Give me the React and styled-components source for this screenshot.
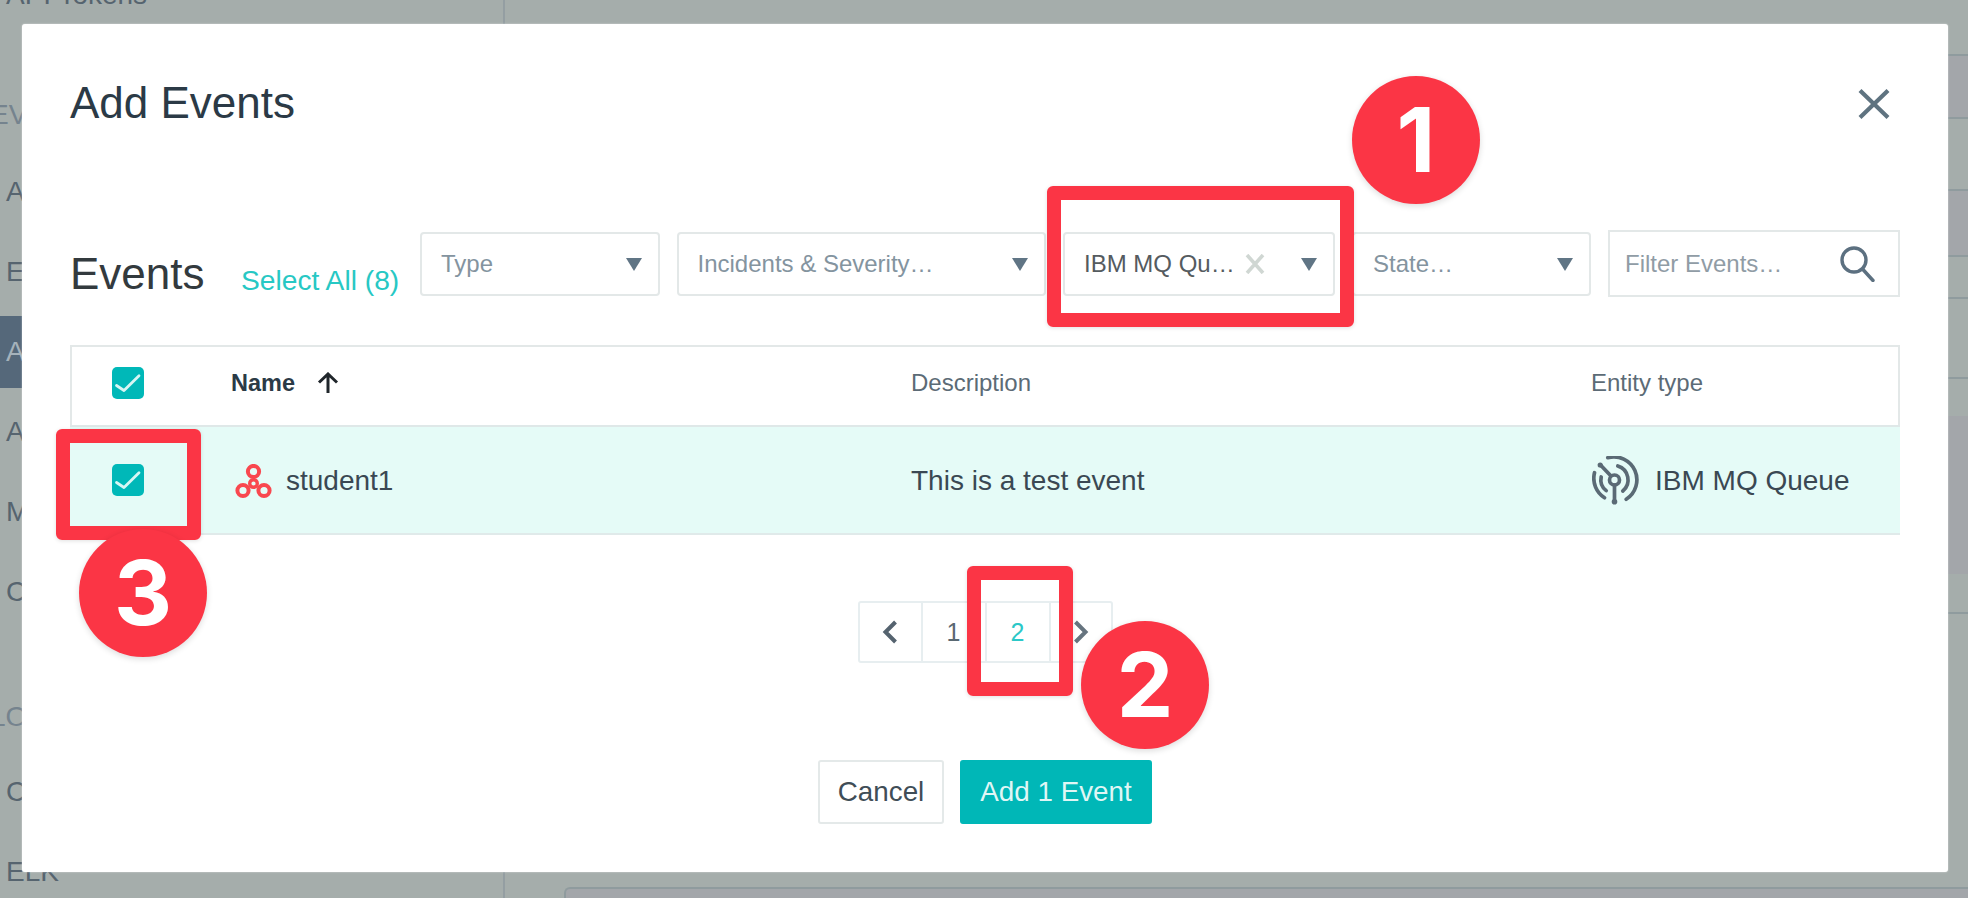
import React from "react";
import styled, { createGlobalStyle } from "styled-components";

const GlobalStyle = createGlobalStyle`
  html, body {
    margin: 0;
    padding: 0;
    height: 100%;
    overflow: hidden;
    background: #a5adab;
  }
  * {
    box-sizing: border-box;
  }
  body {
    font-family: "Liberation Sans", Arial, sans-serif;
  }
`;

const Page = styled.div`
  position: relative;
  display: flex;
  width: 1968px;
  height: 898px;
  overflow: hidden;
  background: #a5adab;
`;

const Sidebar = styled.nav`
  flex: 0 0 505px;
  height: 898px;
  overflow: hidden;
  border-right: 2px solid #949ea2;
`;

const NavList = styled.div`
  margin-top: -45px;
`;

const NavLabel = styled.div`
  display: flex;
  align-items: flex-end;
  height: ${(p) => p.$h}px;
  padding-bottom: ${(p) => p.$pad}px;
  margin-left: -10px;
  font-size: 28px;
  line-height: 32px;
  color: #75838e;
  white-space: nowrap;
`;

const NavItem = styled.div`
  display: flex;
  align-items: center;
  height: ${(p) => (p.$active ? 72 : 80)}px;
  margin: ${(p) => (p.$active ? "4px 0" : "0")};
  padding-left: 6px;
  font-size: 28px;
  white-space: nowrap;
  color: ${(p) => (p.$active ? "#a5b2bb" : "#56646f")};
  background: ${(p) => (p.$active ? "#55687a" : "transparent")};
`;

const Main = styled.main`
  flex: 1;
  display: flex;
  flex-direction: column;
  min-width: 0;
`;

const Band = styled.div`
  height: ${(p) => p.$h}px;
  background: ${(p) => (p.$lilac ? "#a3a6aa" : "#a5adab")};
  border-bottom: ${(p) => (p.$line ? "2px solid #8f9b9e" : "none")};
`;

const BottomCard = styled.div`
  flex: 1;
  margin-left: 59px;
  background: #a3a6aa;
  border-top: 2px solid #8f9b9e;
  border-left: 2px solid #8f9b9e;
  border-top-left-radius: 6px;
`;

const Modal = styled.section`
  position: absolute;
  left: 22px;
  top: 24px;
  width: 1926px;
  height: 848px;
  padding: 56px 48px 0;
  background: #fff;
  border-radius: 3px;
  box-shadow: 0 0 2px rgba(255, 255, 255, 0.6);
`;

const ModalHeader = styled.header`
  display: flex;
  align-items: center;
  justify-content: space-between;
  height: 46px;
`;

const ModalTitle = styled.h1`
  margin: 0;
  font-size: 44px;
  font-weight: 400;
  line-height: 46px;
  color: #2b3a46;
`;

const CloseButton = styled.button`
  display: flex;
  width: 32px;
  height: 30px;
  margin: 2px 10px 0 0;
  padding: 0;
  border: 0;
  background: none;
`;

const FilterRow = styled.div`
  display: flex;
  align-items: center;
  height: 67px;
  margin-top: 104px;
`;

const EventsHeading = styled.h2`
  flex: 0 0 171px;
  margin: 20px 0 0;
  font-size: 44px;
  font-weight: 400;
  line-height: 50px;
  color: #333a3e;
`;

const SelectAll = styled.a`
  flex: 0 0 179px;
  margin-top: 32px;
  font-size: 28.2px;
  line-height: 34px;
  color: #27c8c4;
`;

const Filters = styled.div`
  display: flex;
  align-items: center;
  gap: 17px;
`;

const Select = styled.div`
  display: flex;
  align-items: center;
  flex: none;
  width: ${(p) => p.$w}px;
  height: 64px;
  padding: 1px 16px 0 19px;
  border: 2px solid #e3e8e8;
  border-radius: 4px;
  font-size: 24px;
  color: ${(p) => (p.$filled ? "#555b5f" : "#84949f")};
  background: #fff;
`;

const SelectText = styled.span`
  flex: 1;
  white-space: nowrap;
`;

const Caret = styled.span`
  width: 0;
  height: 0;
  border-left: 8px solid transparent;
  border-right: 8px solid transparent;
  border-top: 13px solid #607585;
`;

const ClearIcon = styled.svg`
  width: 20px;
  height: 20px;
  margin-right: 36px;
`;

const SearchBox = styled.div`
  display: flex;
  align-items: center;
  justify-content: space-between;
  flex: none;
  width: 292px;
  height: 67px;
  padding: 1px 23px 0 15px;
  border: 2px solid #e3e8e8;
  font-size: 24px;
  color: #909ca5;
`;

const Table = styled.div`
  margin-top: 48px;
  border: 2px solid #e3e8e8;
  border-bottom: 0;
`;

const TableHead = styled.div`
  display: grid;
  grid-template-columns: 159px 680px 680px 1fr;
  align-items: center;
  height: 78px;
  padding-bottom: 6px;
  font-size: 24px;
  color: #5c6b76;
`;

const TableRow = styled.div`
  display: grid;
  grid-template-columns: 159px 680px 680px 1fr;
  align-items: center;
  height: 110px;
  margin: 0 -2px;
  padding-left: 2px;
  background: #e5fbf7;
  border-top: 2px solid #dfe8e8;
  border-bottom: 2px solid #e0eaea;
  font-size: 28px;
  line-height: 34px;
  color: #3a4853;
`;

const CheckCell = styled.div`
  padding-left: 40px;
`;

const Checkbox = styled.span`
  display: block;
  width: 32px;
  height: 32px;
  border-radius: 5px;
  background: #00b8b8;
`;

const NameHead = styled.div`
  display: flex;
  align-items: center;
  gap: 22px;
  font-size: 23.5px;
  font-weight: 700;
  color: #2b3a46;
`;

const IconCell = styled.div`
  display: flex;
  align-items: center;
  gap: ${(p) => p.$gap}px;
  padding-top: 2px;
  padding-left: ${(p) => p.$indent || 0}px;
`;

const Pagination = styled.div`
  display: flex;
  justify-content: center;
  margin-top: 66px;
`;

const PageList = styled.div`
  display: flex;
  height: 62px;
  border: 2px solid #e7eef0;
  border-radius: 3px;
`;

const PageCell = styled.div`
  display: flex;
  align-items: center;
  justify-content: center;
  width: ${(p) => p.$w}px;
  border-left: ${(p) => (p.$first ? "0" : "2px solid #e7eef0")};
  font-size: 25px;
  color: ${(p) => (p.$active ? "#2cc8c8" : "#5a6872")};
`;

const Footer = styled.footer`
  display: flex;
  justify-content: center;
  gap: 16px;
  margin-top: 97px;
`;

const Button = styled.button`
  height: 64px;
  width: ${(p) => p.$w}px;
  padding: 0;
  border: 2px solid ${(p) => (p.$primary ? "#00b7b7" : "#e4e9e9")};
  border-radius: 3px;
  background: ${(p) => (p.$primary ? "#00b7b7" : "#fff")};
  color: ${(p) => (p.$primary ? "#dff6f5" : "#404d57")};
  font-family: inherit;
  font-size: 27.8px;
`;

const Highlight = styled.div`
  position: absolute;
  left: ${(p) => p.$x}px;
  top: ${(p) => p.$y}px;
  width: ${(p) => p.$w}px;
  height: ${(p) => p.$h}px;
  border: 14px solid #fb3545;
  border-radius: 6px;
  box-shadow: 0 1px 4px rgba(0, 0, 0, 0.12);
`;

const Badge = styled.div`
  position: absolute;
  left: ${(p) => p.$x}px;
  top: ${(p) => p.$y}px;
  display: flex;
  align-items: center;
  justify-content: center;
  width: 128px;
  height: 128px;
  border-radius: 50%;
  background: #fb3545;
  box-shadow: 0 2px 6px rgba(0, 0, 0, 0.14);
  font-family: Inter, "Liberation Sans", sans-serif;
  font-size: 90px;
  font-weight: 700;
  line-height: 1;
  color: #fff;
`;

const Check = () => (
  <Checkbox>
    <svg width="32" height="32" viewBox="0 0 32 32" fill="none">
      <path d="M4.5 18.5 12 23.5 27 8.8" stroke="#d8f6f4" strokeWidth="2.8" strokeLinecap="round" strokeLinejoin="round" />
    </svg>
  </Checkbox>
);

const KafkaIcon = () => (
  <svg width="37" height="35" viewBox="0 0 37 35" fill="none" stroke="#f9474f" strokeWidth="4">
    <circle cx="18.5" cy="7.5" r="5.6" />
    <circle cx="8" cy="26.5" r="5.6" />
    <circle cx="29" cy="26.5" r="5.6" />
    <circle cx="18.5" cy="19.5" r="3.8" strokeWidth="3.4" />
  </svg>
);

const QueueIcon = () => (
  <svg width="47" height="50" viewBox="0 0 47 50" fill="none" stroke="#5a6a75" strokeWidth="3.7" strokeLinecap="round">
    <circle cx="22.5" cy="24" r="5" />
    <path d="M22.5 29v16" />
    <path d="M19 20 8.5 9" />
    <circle cx="8.2" cy="9" r="2.6" fill="#5a6a75" stroke="none" />
    <circle cx="22.5" cy="45.7" r="2.8" fill="#5a6a75" stroke="none" />
    <path d="M15.8 1.7A23 23 0 0 1 34.2 43.3" />
    <path d="M2.5 16.7A23 23 0 0 0 12.5 41.7" />
    <path d="M25.8 10A14.5 14.5 0 0 1 30.8 35" />
    <path d="M9.2 21A13.5 13.5 0 0 0 14.2 34.6" />
  </svg>
);

const bands = [
  { h: 56, line: true },
  { h: 63, lilac: true, line: true },
  { h: 72, line: true },
  { h: 66, lilac: true, line: true },
  { h: 42, line: true },
  { h: 80, line: true },
  { h: 37 },
  { h: 158, lilac: true },
  { h: 40, line: true },
  { h: 273 },
];

const navItems = ["Alert Channels", "Events", "Alerts", "Applications", "Maintenance", "Custom Payload"];

const App = () => {
  return (
    <Page>
      <GlobalStyle />
      <Sidebar>
        <NavList>
          <NavItem>API Tokens</NavItem>
          <NavLabel $h={117} $pad={21}>EVENTS &amp; ALERTS</NavLabel>
          {navItems.map((item) => (
            <NavItem key={item} $active={item === "Alerts"}>
              {item}
            </NavItem>
          ))}
          <NavLabel $h={120} $pad={19}>LOGGING</NavLabel>
          <NavItem>Custom Logs</NavItem>
          <NavItem>ELK</NavItem>
        </NavList>
      </Sidebar>
      <Main>
        {bands.map((band, i) => (
          <Band key={i} $h={band.h} $lilac={band.lilac} $line={band.line} />
        ))}
        <BottomCard />
      </Main>

      <Modal>
        <ModalHeader>
          <ModalTitle>Add Events</ModalTitle>
          <CloseButton aria-label="Close">
            <svg width="32" height="30" viewBox="0 0 32 30" fill="none" stroke="#5f7380" strokeWidth="4.2">
              <path d="M2 1.5 30 28.5M30 1.5 2 28.5" />
            </svg>
          </CloseButton>
        </ModalHeader>

        <FilterRow>
          <EventsHeading>Events</EventsHeading>
          <SelectAll>Select All (8)</SelectAll>
          <Filters>
            <Select $w={239.5}>
              <SelectText>Type</SelectText>
              <Caret />
            </Select>
            <Select $w={369.5}>
              <SelectText>Incidents &amp; Severity…</SelectText>
              <Caret />
            </Select>
            <Select $w={272} $filled>
              <SelectText>IBM MQ Qu…</SelectText>
              <ClearIcon viewBox="0 0 20 20" fill="none" stroke="#d0d7d3" strokeWidth="3.6">
                <path d="M2 1 18 19M18 1 2 19" />
              </ClearIcon>
              <Caret />
            </Select>
            <Select $w={239}>
              <SelectText>State…</SelectText>
              <Caret />
            </Select>
            <SearchBox>
              Filter Events…
              <svg width="35" height="36" viewBox="0 0 35 36" fill="none" stroke="#5c7080" strokeWidth="3.4">
                <circle cx="14" cy="14" r="12" />
                <path d="M22.5 23 33 34.5" strokeLinecap="round" />
              </svg>
            </SearchBox>
          </Filters>
        </FilterRow>

        <Table>
          <TableHead>
            <CheckCell>
              <Check />
            </CheckCell>
            <NameHead>
              Name
              <svg width="22" height="22" viewBox="0 0 22 22" fill="none" stroke="#20262b" strokeWidth="3">
                <path d="M11 21V2M2 10.5 11 2l9 8.5" />
              </svg>
            </NameHead>
            <div>Description</div>
            <div>Entity type</div>
          </TableHead>
          <TableRow>
            <CheckCell>
              <Check />
            </CheckCell>
            <IconCell $gap={14} $indent={4}>
              <KafkaIcon />
              student1
            </IconCell>
            <IconCell $gap={0}>This is a test event</IconCell>
            <IconCell $gap={16} $indent={1}>
              <QueueIcon />
              IBM MQ Queue
            </IconCell>
          </TableRow>
        </Table>

        <Pagination>
          <PageList>
            <PageCell $first $w={61}>
              <svg width="16" height="24" viewBox="0 0 16 24" fill="none" stroke="#55636f" strokeWidth="4">
                <path d="M13.5 2 3.5 12l10 10" />
              </svg>
            </PageCell>
            <PageCell $w={64}>1</PageCell>
            <PageCell $w={64} $active>2</PageCell>
            <PageCell $w={62}>
              <svg width="16" height="24" viewBox="0 0 16 24" fill="none" stroke="#66747f" strokeWidth="4">
                <path d="M2.5 2l10 10-10 10" />
              </svg>
            </PageCell>
          </PageList>
        </Pagination>

        <Footer>
          <Button $w={126}>Cancel</Button>
          <Button $w={192} $primary>Add 1 Event</Button>
        </Footer>
      </Modal>

      <Highlight $x={1047} $y={186} $w={307} $h={141} />
      <Highlight $x={967} $y={566} $w={106} $h={130} />
      <Highlight $x={56} $y={429} $w={145} $h={111} />
      <Badge $x={1352} $y={76}>1</Badge>
      <Badge $x={1081} $y={621}>2</Badge>
      <Badge $x={79} $y={529}>3</Badge>
    </Page>
  );
};

export default App;
